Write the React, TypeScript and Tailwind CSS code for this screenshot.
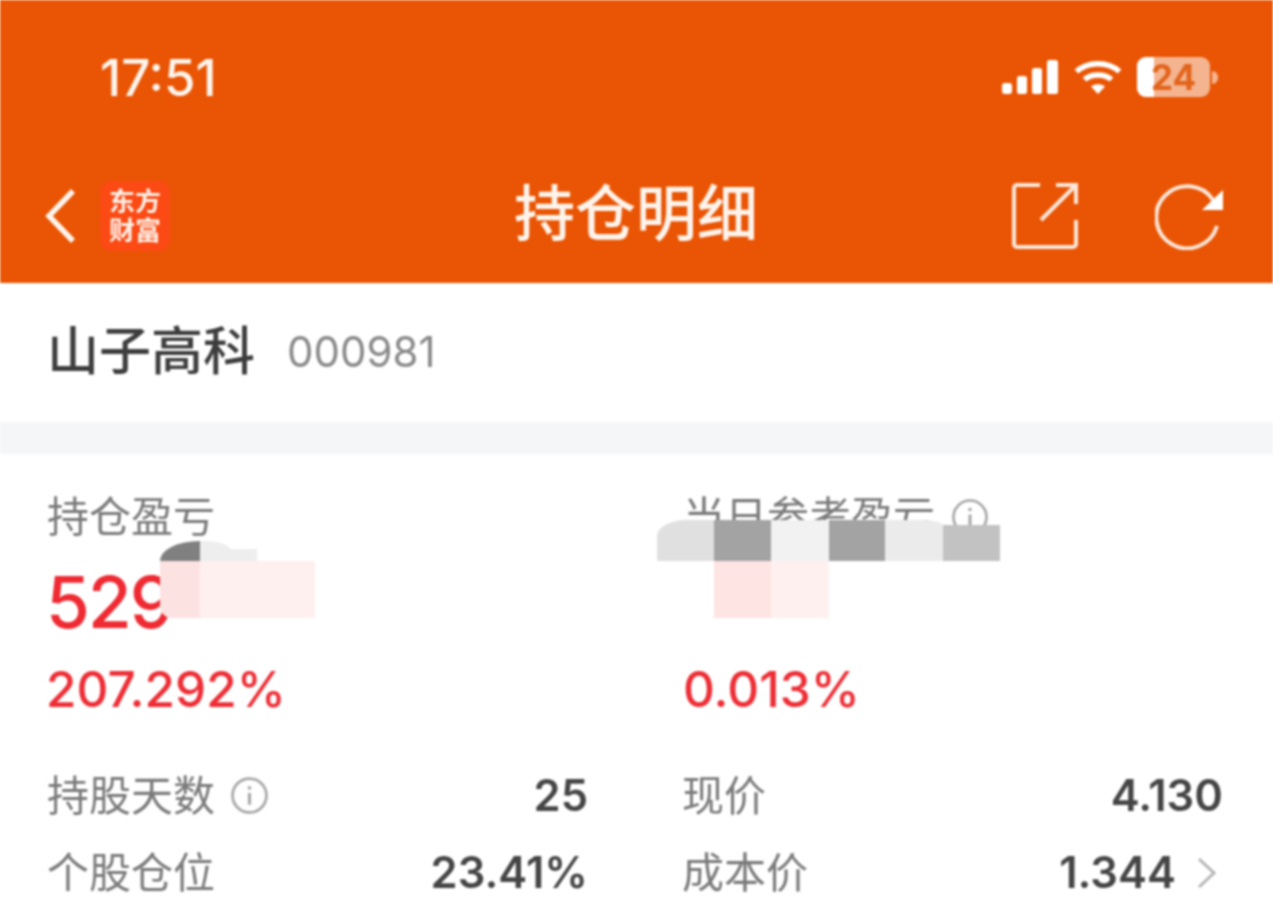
const FONT = "font-['Inter','Noto_Sans_CJK_SC',sans-serif]";

function InfoIcon({ className }: { className?: string }) {
  return (
    <svg viewBox="0 0 36 36" className={className} fill="none" stroke="#a6a6a6">
      <circle cx="18" cy="18" r="16.5" strokeWidth="2.6" />
      <path d="M18 15.5V27" strokeWidth="3" />
      <circle cx="18" cy="10.5" r="1.8" fill="#a6a6a6" stroke="none" />
    </svg>
  );
}

function StatusIcons() {
  return (
    <div className="flex items-center">
      <svg viewBox="0 0 56 34" className="h-[34px] w-[56px]" fill="#fff">
        <rect x="0" y="23" width="10" height="11" rx="3" />
        <rect x="15" y="16" width="10" height="18" rx="2.5" />
        <rect x="30" y="8" width="10" height="26" rx="2.5" />
        <rect x="45" y="0" width="11" height="34" rx="2.5" />
      </svg>
      <svg viewBox="0 0 48 34" className="ml-[16px] h-[34px] w-[48px]" fill="none" stroke="#fff" strokeWidth="5.5">
        <path d="M2.5 11.5C14 1 34 1 45.5 11.5" />
        <path d="M10.5 19.5C17.5 13.5 30.5 13.5 37.5 19.5" />
        <path d="M24 34l-7-7.5c4-3 10-3 14 0z" fill="#fff" stroke="none" />
      </svg>
      <div className="relative ml-[15px] flex h-[40px] w-[73px] items-center justify-center overflow-hidden rounded-[9px] bg-[#f4b48f]">
        <div className="absolute inset-y-0 left-0 w-[17px] bg-white" />
        <span className="relative text-[35px] font-bold leading-none text-[#e2641c]">24</span>
      </div>
      <div className="ml-[2px] h-[13px] w-[6px] rounded-r-full bg-[#f4b48f]" />
    </div>
  );
}

function Logo() {
  return (
    <div className="ml-[25px] flex h-[70px] w-[70px] flex-col items-center justify-center rounded-[10px] bg-[#fb4a14] text-[26px] font-bold leading-[29px] text-[#fff1e8]">
      <span>东方</span>
      <span>财富</span>
    </div>
  );
}

function Row({ label, value, info, arrow }: { label: string; value: string; info?: boolean; arrow?: boolean }) {
  return (
    <div className="flex h-[77px] items-center justify-between">
      <div className="-ml-[1px] flex items-center text-[42px] leading-none text-[#7a7a7a]">
        {label}
        {info && <InfoIcon className="ml-[16px] h-[37px] w-[37px]" />}
      </div>
      <div className="flex items-center text-[43.5px] font-semibold leading-none text-[#454545]">
        {value}
        {arrow && (
          <svg viewBox="0 0 20 32" className="ml-[21px] mr-[6px] h-[32px] w-[20px]" fill="none" stroke="#b5b5b5" strokeWidth="3">
            <path d="M2 2l15 14L2 30" />
          </svg>
        )}
      </div>
    </div>
  );
}

export default function App() {
  return (
    <div className={`${FONT} h-[915px] w-[1273px] overflow-hidden bg-white blur-[0.9px]`}>
      <header className="h-[283px] bg-[#e95504] text-white">
        <div className="flex h-[154px] items-center justify-between pl-[100px] pr-[55px]">
          <span className="text-[51px] font-medium leading-none text-[#fff4ec]">17:51</span>
          <StatusIcons />
        </div>
        <div className="relative flex h-[129px] items-center justify-between pb-[6px] pl-[45px] pr-[50px]">
          <div className="flex items-center">
            <svg viewBox="0 0 30 54" className="h-[54px] w-[30px]" fill="none" stroke="#fff4ec" strokeWidth="5.5">
              <path d="M28 2L4 27l24 25" />
            </svg>
            <Logo />
          </div>
          <div className="absolute left-[514px] top-[28px] text-[61px] font-medium leading-[64px] text-[#fff4ec]">持仓明细</div>
          <div className="flex items-center gap-[77px]">
            <svg viewBox="0 0 66 66" className="h-[66px] w-[66px]" fill="none" stroke="#fde6d8" strokeWidth="4">
              <path d="M28 2H5a3 3 0 0 0-3 3v56a3 3 0 0 0 3 3h56a3 3 0 0 0 3-3V37" />
              <path d="M29 37L63 3" />
              <path d="M44 2h20v19" />
            </svg>
            <svg viewBox="0 0 68 68" className="h-[68px] w-[68px]" fill="none" stroke="#fde6d8" strokeWidth="4">
              <path d="M62 44A31 31 0 1 1 58 18" />
              <path d="M68 8v20H47z" fill="#fff" stroke="none" />
            </svg>
          </div>
        </div>
      </header>

      <section className="flex h-[139px] items-center pb-[2px] pl-[47px]">
        <span className="text-[52px] font-medium leading-none text-[#3d3d3d]">山子高科</span>
        <span className="ml-[32px] text-[42px] leading-none text-[#8a8a8a]">000981</span>
      </section>
      <div className="h-[32px] bg-[#f5f6f8]" />

      <main className="grid grid-cols-[540px_540px] gap-x-[95px] px-[48px]">
        <div className="relative flex h-[288px] flex-col">
          <div className="-ml-[1px] mt-[40px] text-[42px] leading-[46px] text-[#7a7a7a]">持仓盈亏</div>
          <div className="-ml-[2px] mt-[24px] text-[71px] font-medium leading-[76px] tracking-[-2px] text-[#ef2a32]">529</div>
          <div className="-ml-[2px] mt-[24px] text-[49.5px] font-medium leading-[50px] text-[#ee2e36]">207.292%</div>
          <div className="absolute left-[112px] top-[87px] flex h-[20px] w-[97px]">
            <div className="w-[40px] rounded-tl-[40px_20px] bg-[#808080]" />
            <div className="w-[30px] rounded-tr-[30px_8px] bg-[#eeeeee]" />
            <div className="mt-[8px] w-[27px] bg-[#eeeeee]" />
          </div>
          <div className="absolute left-[112px] top-[107px] flex h-[57px] w-[155px]">
            <div className="w-[40px] rounded-bl-[12px] bg-[#fde2e2]" />
            <div className="w-[115px] bg-[#fff0f0]" />
          </div>
        </div>
        <div className="relative flex h-[288px] flex-col">
          <div className="mt-[40px] flex items-center text-[42px] leading-[46px] text-[#7a7a7a]">
            当日参考盈亏
            <InfoIcon className="ml-[17px] h-[36px] w-[36px]" />
          </div>
          <div className="mt-[124px] text-[49.5px] font-medium leading-[50px] text-[#ee2e36]">0.013%</div>
          <div className="absolute -left-[26px] top-[66px] flex h-[41px] w-[343px] items-end">
            <div className="h-full w-[57px] rounded-tl-[30px_16px] bg-[#e0e0e0]" />
            <div className="h-full w-[57px] bg-[#a3a3a3]" />
            <div className="h-full w-[58px] bg-[#f2f2f2]" />
            <div className="h-full w-[56px] bg-[#a3a3a3]" />
            <div className="h-full w-[58px] rounded-tr-[20px_6px] bg-[#ebebeb]" />
            <div className="h-[36px] w-[57px] bg-[#c2c2c2]" />
          </div>
          <div className="absolute left-[31px] top-[107px] flex h-[57px] w-[115px]">
            <div className="w-[57px] bg-[#ffe4e4]" />
            <div className="w-[58px] bg-[#fff0f0]" />
          </div>
        </div>
        <div className="mt-[15px]">
          <Row label="持股天数" value="25" info />
          <Row label="个股仓位" value="23.41%" />
        </div>
        <div className="mt-[15px]">
          <Row label="现价" value="4.130" />
          <Row label="成本价" value="1.344" arrow />
        </div>
      </main>
    </div>
  );
}
